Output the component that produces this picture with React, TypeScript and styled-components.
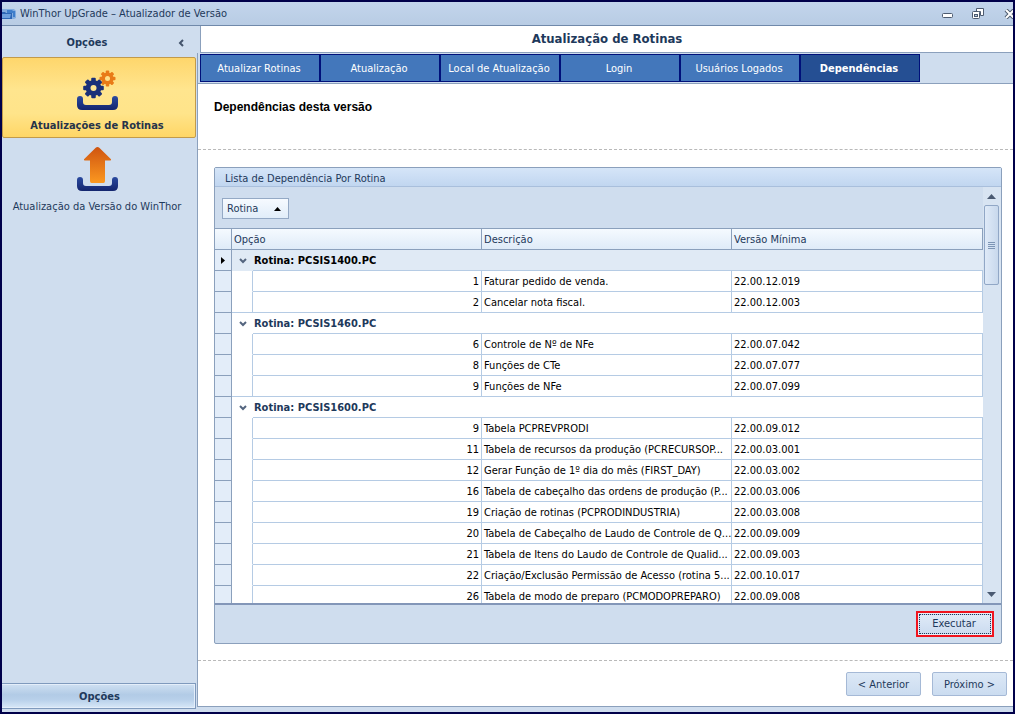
import React, { useState } from "react";
import styled, { createGlobalStyle, css } from "styled-components";

const Global = createGlobalStyle`
  *, *::before, *::after { box-sizing: border-box; }
  html, body { margin: 0; height: 100%; }
  #root { height: 100%; }
  body, button {
    font-family: "DejaVu Sans Condensed", "DejaVu Sans", Tahoma, sans-serif;
    font-size: 11px;
    line-height: 14px;
    color: #1e395b;
  }
  button { margin: 0; padding: 0; border: 0; background: none; cursor: pointer; }
`;

const line = "#8ba0bc";
const panel = "#cfddee";

const Window = styled.div`
  display: flex;
  flex-direction: column;
  min-width: 760px;
  height: 100%;
  min-height: 420px;
  border: 2px solid #00004a;
  background: ${panel};
  overflow: hidden;
`;

const TitleBar = styled.header`
  display: flex;
  flex: none;
  align-items: center;
  height: 24px;
  border-bottom: 1px solid #7089aa;
  background: linear-gradient(#c3d5ec, #b8cce4);
  overflow: hidden;
`;

const TitleText = styled.span`
  flex: 1;
  padding-left: 4px;
`;

const WindowButtons = styled.div`
  display: flex;
  gap: 16px;
  margin-right: -4px;
`;

const WindowButton = styled.button`
  display: flex;
  width: 15px;
  height: 14px;
  align-items: center;
  justify-content: center;
`;

const Body = styled.div`
  display: flex;
  flex: 1;
  min-height: 0;
`;

const Sidebar = styled.nav`
  display: flex;
  flex-direction: column;
  flex: none;
  width: 195px;
  padding: 0 1px 3px 0;
`;

const SidebarHeader = styled.div`
  display: flex;
  align-items: center;
  height: 31px;
  padding: 2px 10px 0 0;
  font-weight: bold;
`;

const SidebarTitle = styled.span`
  flex: 1;
  padding-right: 4px;
  text-align: center;
`;

const CollapseButton = styled.button`
  display: flex;
  width: 10px;
  height: 14px;
  align-items: center;
  justify-content: center;
`;

const NavItem = styled.button<{ $active?: boolean }>`
  display: flex;
  flex-direction: column;
  align-items: center;
  height: 81px;
  gap: 7px;
  padding: 8px 4px 0 0;
  border: 1px solid transparent;
  border-radius: 2px;
  white-space: nowrap;
  ${(p) =>
    p.$active &&
    css`
      gap: 6px;
      padding-top: 12px;
      font-weight: bold;
      color: #26334a;
      border-color: #c29a4a;
      background: linear-gradient(#fed66c, #ffe58e 40%, #ffe48a 70%, #ffd666);
    `}
`;

const NavFooter = styled.button`
  height: 26px;
  margin-top: auto;
  padding: 1px 0 0 2px;
  border: 1px solid #7f9abd;
  border-left: 0;
  box-shadow: inset -1px -1px 0 #e4eefa, inset 0 1px 0 #e4eefa;
  background: linear-gradient(#cfe0f2, #b2cbe6 45%, #b8d0ea 65%, #d8e8f8);
  font-weight: bold;
`;

const Main = styled.main`
  display: flex;
  flex-direction: column;
  flex: 1;
  min-width: 0;
  padding-bottom: 5px;
`;

const PageTitle = styled.h1`
  flex: none;
  height: 27px;
  margin: 0 0 0 3px;
  border: solid ${line};
  border-width: 0 0 1px 1px;
  background: #fff;
  font-size: 13px;
  line-height: 26px;
  text-align: center;
`;

const Tabs = styled.div`
  display: flex;
  flex: none;
  height: 31px;
  padding: 1px 0 1px 2px;
  border: solid ${line};
  border-width: 0 0 1px 1px;
`;

const Tab = styled.button<{ $active: boolean }>`
  flex: 0 1 120px;
  min-width: 0;
  padding: 1px 2px 0 0;
  border: 1px solid #00107a;
  background: #4377bb;
  color: #fff;
  white-space: nowrap;
  ${(p) =>
    p.$active &&
    css`
      background: #254f93;
      font-weight: bold;
    `}
`;

const Page = styled.section`
  display: flex;
  flex-direction: column;
  flex: 1;
  min-height: 0;
  border: solid ${line};
  border-width: 0 0 1px 1px;
  background: #fff;
`;

const PageIntro = styled.h2`
  flex: none;
  height: 66px;
  margin: 0;
  padding: 16px 16px 0;
  border-bottom: 1px dashed #b9b9b9;
  color: #000;
  font-family: "Liberation Sans", Arial, sans-serif;
  font-size: 12px;
  line-height: 14px;
`;

const PageContent = styled.div`
  display: flex;
  flex: 1;
  min-height: 0;
  padding: 17px 11px 16px 16px;
`;

const Wizard = styled.footer`
  display: flex;
  flex: none;
  justify-content: flex-end;
  gap: 11px;
  height: 46px;
  padding: 11px 6px 0;
  border-top: 1px dashed #b9b9b9;
`;

const PushButton = styled.button`
  width: 75px;
  height: 24px;
  padding-top: 1px;
  border: 1px solid #a5b9d6;
  border-radius: 2px;
  background: linear-gradient(#dce8f6, #cbdcf0);
`;

const GroupBox = styled.section`
  display: flex;
  flex-direction: column;
  flex: 1;
  min-width: 0;
  border: 1px solid ${line};
  border-radius: 2px;
  background: ${panel};
`;

const GroupHeader = styled.h3`
  flex: none;
  height: 19px;
  margin: 0;
  padding: 1px 10px 0;
  border-bottom: 1px solid #a9bfdc;
  background: linear-gradient(#d5e5f8, #c1d6f0);
  font-size: 11px;
  font-weight: normal;
  line-height: 20px;
`;

const GridArea = styled.div`
  display: flex;
  flex: 1;
  min-height: 0;
  border-bottom: 2px solid #8396b8;
`;

const GridMain = styled.div`
  display: flex;
  flex-direction: column;
  flex: 1;
  min-width: 0;
  overflow: hidden;
`;

const GroupPanel = styled.div`
  flex: none;
  height: 41px;
  padding: 11px 7px 0;
`;

const GroupChip = styled.button`
  display: flex;
  align-items: center;
  justify-content: space-between;
  width: 67px;
  height: 21px;
  padding: 1px 7px 0 4px;
  border: 1px solid #94a9c5;
  background: linear-gradient(#f6faff, #e1edf9);
`;

const Table = styled.table`
  width: 100%;
  table-layout: fixed;
  border-collapse: separate;
  border-spacing: 0;
  color: #000;
`;

const HeadCell = styled.th`
  height: 22px;
  padding: 1px 2px 0;
  border: solid ${line};
  border-width: 1px 1px 1px 0;
  background: linear-gradient(#f5faff, #dfebf8);
  color: #1e395b;
  font-weight: normal;
  text-align: left;
`;

const Indicator = styled.td`
  height: 21px;
  padding: 0;
  border: solid ${line};
  border-width: 0 1px 1px 0;
  background: #e3edf9;
  line-height: 0;
  text-align: center;
`;

const Indent = styled.td<{ $last: boolean }>`
  padding: 0;
  border-right: 1px solid #b5cbe4;
  border-bottom: 1px solid ${(p) => (p.$last ? "#b5cbe4" : "#fff")};
  background: #fff;
`;

const ToggleCell = styled.td<{ $focused: boolean }>`
  padding: 0;
  background: ${(p) => (p.$focused ? "#e0eaf5" : "#fff")};
  line-height: 0;
  text-align: center;
`;

const Toggle = styled.button`
  width: 12px;
  height: 12px;
  line-height: 0;
`;

const GroupCell = styled.td<{ $focused: boolean }>`
  padding: 2px 1px 0;
  border-bottom: 1px solid #b5cbe4;
  background: ${(p) => (p.$focused ? "#e0eaf5" : "#fff")};
  color: ${(p) => (p.$focused ? "#000" : "#1e395b")};
  font-weight: bold;
`;

const Cell = styled.td<{ $right?: boolean }>`
  padding: 2px ${(p) => (p.$right ? 2 : 0)}px 0 2px;
  border: solid #b5cbe4;
  border-width: 0 1px 1px 0;
  background: #fff;
  overflow: hidden;
  text-align: ${(p) => (p.$right ? "right" : "left")};
  white-space: nowrap;
`;

const ScrollBar = styled.div`
  display: flex;
  flex-direction: column;
  align-items: center;
  flex: none;
  width: 18px;
  padding: 0 2px 0 1px;
  background: #d8e4f2;
`;

const ScrollArrow = styled.button`
  display: flex;
  align-items: center;
  justify-content: center;
  width: 15px;
  height: 18px;
`;

const Thumb = styled.div`
  display: flex;
  align-items: center;
  justify-content: center;
  width: 15px;
  height: 80px;
  margin-bottom: auto;
  border: 1px solid #91a7c6;
  border-radius: 2px;
  background: linear-gradient(90deg, #dfeaf8, #c8d8ec);
`;

const GroupFooter = styled.div`
  display: flex;
  flex: none;
  justify-content: flex-end;
  height: 38px;
  padding: 6px 7px 0;
`;

const Highlight = styled.div`
  width: 78px;
  height: 26px;
  padding: 1px;
  border: 2px solid #f0141e;
  background: #e6eef8;
`;

const ExecuteButton = styled.button`
  width: 100%;
  height: 100%;
  padding-right: 2px;
  border: 1px solid #c3d3e8;
  outline: 1px dotted #1e395b;
  outline-offset: -1px;
  background: linear-gradient(#dfeaf7, #ccdcf0);
`;

function Triangle({ up, color = "#4a5a72", size = 9 }: { up?: boolean; color?: string; size?: number }) {
  const height = size > 8 ? 5 : 4;
  return (
    <svg width={size} height={height} viewBox="0 0 10 5" preserveAspectRatio="none" aria-hidden="true">
      <path d={up ? "M0 5L5 0L10 5Z" : "M0 0L5 5L10 0Z"} fill={color} />
    </svg>
  );
}

function Gear({ cx, cy, r, fill }: { cx: number; cy: number; r: number; fill: string }) {
  return (
    <g transform={`translate(${cx} ${cy})`}>
      {[0, 45, 90, 135].map((a) => (
        <rect key={a} x={-r * 0.22} y={-r} width={r * 0.44} height={r * 2} rx="1" fill={fill} transform={`rotate(${a})`} />
      ))}
      <circle r={r * 0.76} fill={fill} />
    </g>
  );
}

function Tray({ y }: { y: number }) {
  return (
    <path
      d={`M0 ${y + 3}Q0 ${y} 3 ${y}Q6 ${y} 6 ${y + 3}V${y + 6}Q6 ${y + 9} 9 ${y + 9}H32Q35 ${y + 9} 35 ${y + 6}V${y + 3}Q35 ${y} 38 ${y}Q41 ${y} 41 ${y + 3}V${y + 9}Q41 ${y + 14} 36 ${y + 14}H5Q0 ${y + 14} 0 ${y + 9}Z`}
      fill="url(#navy)"
    />
  );
}

function Gradients() {
  return (
    <defs>
      <linearGradient id="navy" x1="0" y1="0" x2="0" y2="1">
        <stop offset="0" stopColor="#2a4aa0" />
        <stop offset="1" stopColor="#14256e" />
      </linearGradient>
      <linearGradient id="orange" x1="0" y1="0" x2="0" y2="1">
        <stop offset="0" stopColor="#cf5410" />
        <stop offset="1" stopColor="#fb9820" />
      </linearGradient>
    </defs>
  );
}

function GearsIcon() {
  return (
    <svg width="41" height="43" viewBox="0 0 41 43" aria-hidden="true">
      <Gradients />
      <Gear cx={30.5} cy={8.5} r={8} fill="#e97b18" />
      <circle cx="30.5" cy="8.5" r="2.5" fill="#ffe08a" />
      <Gear cx={16.5} cy={18} r={10.3} fill="#1a3079" />
      <circle cx="16.5" cy="18" r="3" fill="#ffe593" />
      <Tray y={26} />
    </svg>
  );
}

function UploadIcon() {
  return (
    <svg width="41" height="46" viewBox="0 0 41 46" aria-hidden="true">
      <Gradients />
      <path d="M20.5 0Q21.5 0 22.3 .8L34 12.3Q34.5 13.5 33 13.5H28V34Q28 36 26.500 36H14.500Q13 36 13 34V13.500H8Q6.500 13.500 7 12.300L18.700 .8Q19.500 0 20.500 0Z" fill="url(#orange)" />
      <Tray y={30} />
    </svg>
  );
}

function AppIcon() {
  return (
    <svg width="14" height="13" viewBox="0 0 14 13" aria-hidden="true">
      <path d="M0 2H12L14 4V11L12 12H0Z" fill="#82acdf" />
      <path d="M5 3H10L11 4H13V10H11V6H5Z" fill="#3f7ecb" />
      <path d="M0 5H3L4 6H10V12H0Z" fill="#2d66b5" />
      <path d="M0 7H9L8 11H0Z" fill="#6da0de" />
    </svg>
  );
}

const tabs = ["Atualizar Rotinas", "Atualização", "Local de Atualização", "Login", "Usuários Logados", "Dependências"];

const groups = [
  {
    name: "PCSIS1400.PC",
    rows: [
      [1, "Faturar pedido de venda.", "22.00.12.019"],
      [2, "Cancelar nota fiscal.", "22.00.12.003"],
    ],
  },
  {
    name: "PCSIS1460.PC",
    rows: [
      [6, "Controle de Nº de NFe", "22.00.07.042"],
      [8, "Funções de CTe", "22.00.07.077"],
      [9, "Funções de NFe", "22.00.07.099"],
    ],
  },
  {
    name: "PCSIS1600.PC",
    rows: [
      [9, "Tabela PCPREVPRODI", "22.00.09.012"],
      [11, "Tabela de recursos da produção (PCRECURSOP...", "22.00.03.001"],
      [12, "Gerar Função de 1º dia do mês (FIRST_DAY)", "22.00.03.002"],
      [16, "Tabela de cabeçalho das ordens de produção (P...", "22.00.03.006"],
      [19, "Criação de rotinas (PCPRODINDUSTRIA)", "22.00.03.008"],
      [20, "Tabela de Cabeçalho de Laudo de Controle de Q...", "22.00.09.009"],
      [21, "Tabela de Itens do Laudo de Controle de Qualid...", "22.00.09.003"],
      [22, "Criação/Exclusão Permissão de Acesso (rotina 5...", "22.00.10.017"],
      [26, "Tabela de modo de preparo (PCMODOPREPARO)", "22.00.09.008"],
    ],
  },
];

function DependencyTable() {
  const [closed, setClosed] = useState<string[]>([]);
  const toggle = (name: string) =>
    setClosed((c) => (c.includes(name) ? c.filter((n) => n !== name) : [...c, name]));

  return (
    <Table>
      <colgroup>
        <col style={{ width: 17 }} />
        <col style={{ width: 21 }} />
        <col style={{ width: 229 }} />
        <col style={{ width: 250 }} />
        <col />
      </colgroup>
      <thead>
        <tr>
          <HeadCell aria-label="Linha atual" />
          <HeadCell colSpan={2}>Opção</HeadCell>
          <HeadCell>Descrição</HeadCell>
          <HeadCell>Versão Mínima</HeadCell>
        </tr>
      </thead>
      <tbody>
        {groups.map((g, gi) => (
          <React.Fragment key={g.name}>
            <tr>
              <Indicator>
                {gi === 0 && (
                  <svg width="4" height="7" viewBox="0 0 4 7" aria-hidden="true">
                    <path d="M0 0L4 3.500L0 7Z" fill="#000" />
                  </svg>
                )}
              </Indicator>
              <ToggleCell $focused={gi === 0}>
                <Toggle aria-label={`Recolher ${g.name}`} onClick={() => toggle(g.name)}>
                  <svg width="8" height="6" viewBox="0 0 8 6" aria-hidden="true">
                    <path d="M1 1L4 4L7 1" fill="none" stroke="#54657f" strokeWidth="2" />
                  </svg>
                </Toggle>
              </ToggleCell>
              <GroupCell colSpan={3} $focused={gi === 0}>
                Rotina: {g.name}
              </GroupCell>
            </tr>
            {!closed.includes(g.name) &&
              g.rows.map((r, i) => (
                <tr key={r[0]}>
                  <Indicator />
                  <Indent $last={i === g.rows.length - 1} />
                  <Cell $right>{r[0]}</Cell>
                  <Cell>{r[1]}</Cell>
                  <Cell>{r[2]}</Cell>
                </tr>
              ))}
          </React.Fragment>
        ))}
      </tbody>
    </Table>
  );
}

export default function App() {
  const [tab, setTab] = useState(5);

  return (
    <>
      <Global />
      <Window>
        <TitleBar>
          <AppIcon />
          <TitleText>WinThor UpGrade – Atualizador de Versão</TitleText>
          <WindowButtons>
            <WindowButton aria-label="Minimizar">
              <svg width="12" height="12" viewBox="0 0 12 12" aria-hidden="true">
                <rect x=".5" y="5.500" width="10" height="4" rx="1" fill="#fff" stroke="#4d5b70" />
              </svg>
            </WindowButton>
            <WindowButton aria-label="Restaurar">
              <svg width="13" height="12" viewBox="0 0 13 12" aria-hidden="true">
                <path d="M4.500 .5H11.500V7.500H8.500V3.500H4.500Z" fill="#fff" stroke="#4d5b70" />
                <rect x=".5" y="3.500" width="7" height="7" rx="1" fill="#fff" stroke="#4d5b70" />
                <rect x="2.500" y="6.500" width="3" height="2" fill="#b9cde5" stroke="#4d5b70" />
              </svg>
            </WindowButton>
            <WindowButton aria-label="Fechar">
              <svg width="12" height="10" viewBox="0 0 12 10" aria-hidden="true">
                <path d="M2 1L10 9M10 1L2 9" stroke="#4d5b70" strokeWidth="4" />
                <path d="M2 1L10 9M10 1L2 9" stroke="#fff" strokeWidth="2" />
              </svg>
            </WindowButton>
          </WindowButtons>
        </TitleBar>
        <Body>
          <Sidebar>
            <SidebarHeader>
              <SidebarTitle>Opções</SidebarTitle>
              <CollapseButton aria-label="Recolher painel">
                <svg width="6" height="8" viewBox="0 0 6 8" aria-hidden="true">
                  <path d="M5 1L2 4L5 7" fill="none" stroke="#44546c" strokeWidth="2" />
                </svg>
              </CollapseButton>
            </SidebarHeader>
            <NavItem $active>
              <GearsIcon />
              Atualizações de Rotinas
            </NavItem>
            <NavItem>
              <UploadIcon />
              Atualização da Versão do WinThor
            </NavItem>
            <NavFooter>Opções</NavFooter>
          </Sidebar>
          <Main>
            <PageTitle>Atualização de Rotinas</PageTitle>
            <Tabs>
              {tabs.map((t, i) => (
                <Tab key={t} $active={i === tab} onClick={() => setTab(i)}>
                  {t}
                </Tab>
              ))}
            </Tabs>
            <Page>
              <PageIntro>Dependências desta versão</PageIntro>
              <PageContent>
                <GroupBox>
                  <GroupHeader>Lista de Dependência Por Rotina</GroupHeader>
                  <GridArea>
                    <GridMain>
                      <GroupPanel>
                        <GroupChip>
                          Rotina
                          <Triangle up color="#000" size={7} />
                        </GroupChip>
                      </GroupPanel>
                      <DependencyTable />
                    </GridMain>
                    <ScrollBar>
                      <ScrollArrow aria-label="Rolar para cima">
                        <Triangle up />
                      </ScrollArrow>
                      <Thumb>
                        <svg width="7" height="7" viewBox="0 0 7 7" aria-hidden="true">
                          <path d="M0 .5H7M0 2.500H7M0 4.500H7M0 6.500H7" stroke="#7d95b5" />
                        </svg>
                      </Thumb>
                      <ScrollArrow aria-label="Rolar para baixo">
                        <Triangle />
                      </ScrollArrow>
                    </ScrollBar>
                  </GridArea>
                  <GroupFooter>
                    <Highlight>
                      <ExecuteButton>Executar</ExecuteButton>
                    </Highlight>
                  </GroupFooter>
                </GroupBox>
              </PageContent>
              <Wizard>
                <PushButton>&lt; Anterior</PushButton>
                <PushButton>Próximo &gt;</PushButton>
              </Wizard>
            </Page>
          </Main>
        </Body>
      </Window>
    </>
  );
}
